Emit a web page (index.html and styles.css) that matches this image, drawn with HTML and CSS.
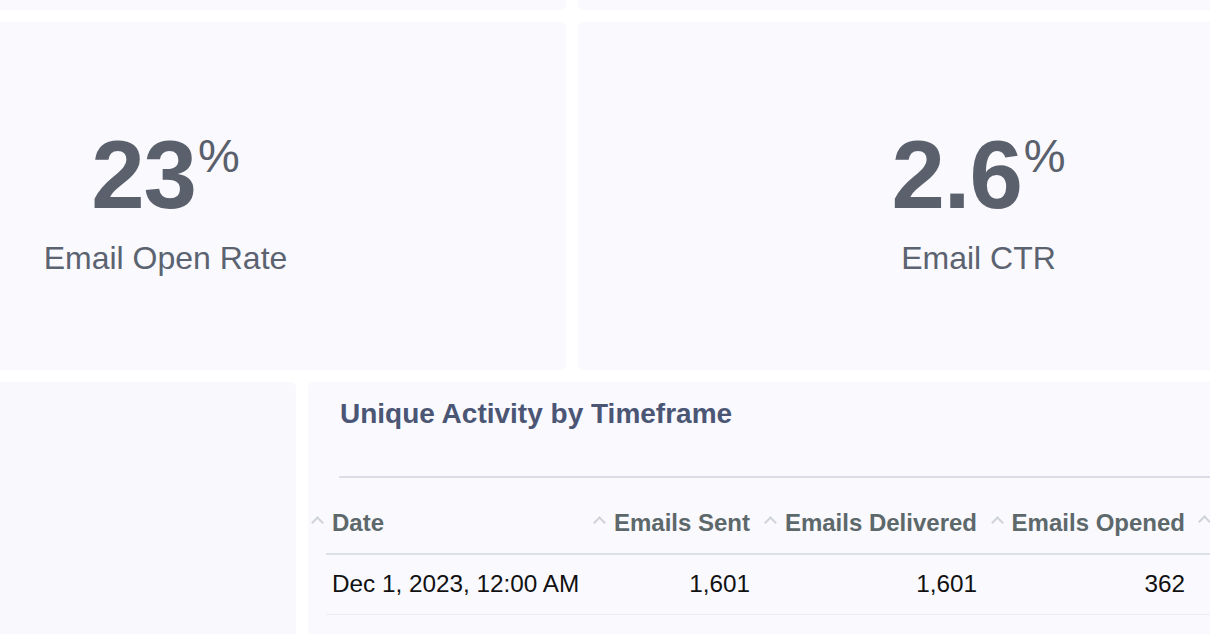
FILE: index.html
```html
<!DOCTYPE html>
<html lang="en">
<head>
<meta charset="utf-8">
<title>Email Dashboard</title>
<link rel="stylesheet" href="styles.css">
</head>
<body>
<div class="viewport">
  <div class="page">
    <div class="row row-top">
      <div class="card"></div>
      <div class="card"></div>
    </div>
    <div class="row row-stats">
      <div class="card stat">
        <div class="stat-value"><span class="num">23</span><span class="unit">%</span></div>
        <div class="stat-label">Email Open Rate</div>
      </div>
      <div class="card stat">
        <div class="stat-value"><span class="num">2.6</span><span class="unit">%</span></div>
        <div class="stat-label">Email CTR</div>
      </div>
    </div>
    <div class="row row-bottom">
      <div class="card ghost"></div>
      <div class="card table-card">
        <h2 class="title">Unique Activity by Timeframe</h2>
        <div class="divider"></div>
        <table class="data">
          <colgroup>
            <col class="c-date">
            <col class="c-sent">
            <col class="c-deliv">
            <col class="c-open">
            <col class="c-click">
          </colgroup>
          <thead>
            <tr>
              <th class="left"><span class="lbl">Date</span></th>
              <th><span class="lbl">Emails Sent</span></th>
              <th><span class="lbl">Emails Delivered</span></th>
              <th><span class="lbl">Emails Opened</span></th>
              <th class="left"><span class="lbl lbl-offscreen"></span></th>
            </tr>
          </thead>
          <tbody>
            <tr>
              <td class="left">Dec 1, 2023, 12:00 AM</td>
              <td>1,601</td>
              <td>1,601</td>
              <td>362</td>
              <td class="left"></td>
            </tr>
            <tr class="empty">
              <td></td><td></td><td></td><td></td><td></td>
            </tr>
          </tbody>
        </table>
      </div>
    </div>
  </div>
</div>
</body>
</html>
```

FILE: styles.css
```css
html, body {
  margin: 0;
  padding: 0;
  background: #ffffff;
  overflow: hidden;
  width: 1210px;
  height: 634px;
}

.viewport {
  width: 1210px;
  height: 634px;
  overflow: hidden;
  font-family: "Liberation Sans", Arial, Helvetica, sans-serif;
}

.page {
  width: 1614px;
  margin-left: -235px;
  margin-top: -338px;
  display: flex;
  flex-direction: column;
  gap: 12px;
}

.row {
  display: flex;
  gap: 12px;
}

.card {
  background: #f9f9fe;
  border-radius: 5px;
}

.row-top .card,
.row-stats .card {
  flex: 1 1 0;
  height: 348px;
}

.stat {
  display: flex;
  flex-direction: column;
  align-items: center;
  padding-top: 105px;
  box-sizing: border-box;
  color: #5a606c;
}

.stat-value {
  display: flex;
  align-items: flex-start;
}

.num {
  font-size: 96px;
  line-height: 1;
  font-weight: 700;
  letter-spacing: -1px;
}

.unit {
  font-size: 47px;
  line-height: 1;
  margin-top: 5px;
  margin-left: 2px;
}

.stat-label {
  margin-top: 16px;
  font-size: 32px;
  line-height: 38px;
  color: #5c6370;
}

.row-bottom .card {
  height: 400px;
}

.ghost {
  width: 531px;
  flex: none;
  background: #f8f8fd;
}

.table-card {
  flex: 1 1 0;
  box-sizing: border-box;
  padding-top: 15px;
  overflow: hidden;
}

.title {
  margin: 0 0 0 32px;
  font-size: 28px;
  line-height: 34px;
  font-weight: 700;
  color: #4b5674;
}

.divider {
  margin: 45px 0 0 31px;
  height: 2px;
  background: #dcdde6;
}

.data {
  margin-left: 18px;
  border-collapse: collapse;
  table-layout: fixed;
  width: 1065px;
  font-size: 24.3px;
  line-height: 30px;
}

.c-date { width: 263px; }
.c-sent { width: 167px; }
.c-deliv { width: 227px; }
.c-open { width: 208px; }
.c-click { width: 200px; }

.data th {
  text-align: right;
  font-size: 24px;
  font-weight: 700;
  color: #5d686b;
  padding: 30px 6px 15px;
  border-bottom: 2px solid #dde1e5;
  white-space: nowrap;
}

.data th .lbl {
  position: relative;
}

.data th .lbl::before {
  content: "";
  position: absolute;
  right: 100%;
  margin-right: 10px;
  top: 9px;
  width: 7px;
  height: 7px;
  border-left: 2px solid #cfd3d7;
  border-top: 2px solid #cfd3d7;
  transform: rotate(45deg);
}

.data th .lbl-offscreen {
  display: inline-block;
  width: 40px;
  height: 30px;
  vertical-align: top;
  margin-left: 22px;
}

.data td {
  text-align: right;
  color: #111111;
  padding: 14px 6px 15px;
  border-bottom: 1px solid #eeeef4;
  white-space: nowrap;
}

.data .left {
  text-align: left;
}

.data tr.empty td {
  height: 30px;
  border-bottom: none;
}
```
